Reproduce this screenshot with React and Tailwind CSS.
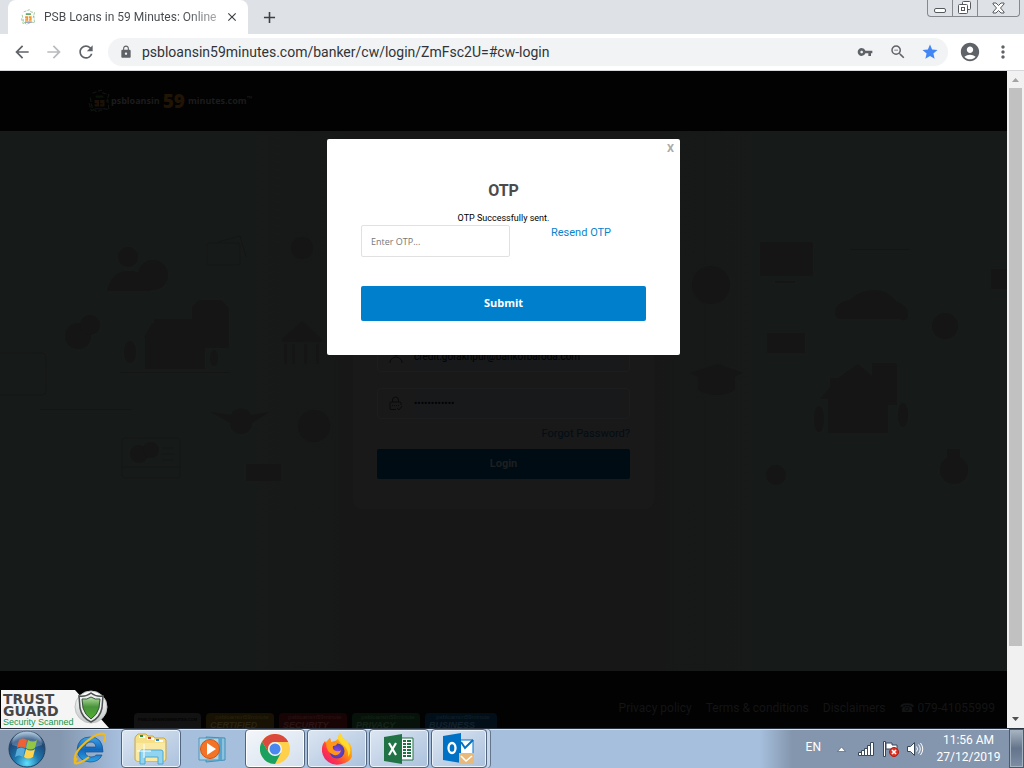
import React from "react";
import { MdArrowBack, MdArrowForward, MdRefresh, MdLock, MdVpnKey, MdZoomOut, MdStar, MdAccountCircle, MdMoreVert, MdClose, MdAdd } from "react-icons/md";

function NotesIcon({ className }) {
  return (
    <svg viewBox="0 0 20 22" className={className} aria-hidden="true">
      <g fill="none" stroke="#7fb77e" strokeWidth="1" strokeDasharray="4 1.5">
        <path d="M4 4 12 1 14 4 19 5 17 12" />
        <path d="M2 8 4 18 8 21 15 18 19 19 18 9" />
        <path d="M1 13 3 20 7 18" />
      </g>
      <path d="M7 6h7v2H7z" fill="#3e9a4c" />
      <path d="M6 10h4v6H6v-2h2v-1H6zM11 10h4v6h-4v-2h2v-1h-2z" fill="#f4962a" />
      <path d="M6 18h9" stroke="#52639c" strokeWidth="1.3" />
    </svg>
  );
}

function TabStrip() {
  return (
    <div className="flex h-[34px] shrink-0 items-start justify-between bg-[#dee1e6]">
      <div className="flex h-full items-center pl-2">
        <div className="flex h-full w-60 items-center rounded-t-lg bg-white pr-2 pl-3">
          <NotesIcon className="h-4 w-4 shrink-0" />
          <span className="ml-2 flex-1 overflow-hidden bg-linear-to-r from-[#45494d] from-80% to-[#b5b7b9] bg-clip-text font-[Roboto,sans-serif] text-[12px] whitespace-nowrap text-transparent">
            PSB Loans in 59 Minutes: Online
          </span>
          <button aria-label="Close tab" className="ml-1 flex h-4 w-4 items-center justify-center text-[#3c4043]">
            <MdClose size={14} />
          </button>
        </div>
        <button aria-label="New tab" className="ml-3 text-[#3c4043]">
          <MdAdd size={19} />
        </button>
      </div>
      <div className="mr-1 flex h-[17px] overflow-hidden rounded-b border border-t-0 border-[#85898e] text-[#55595e]">
        <button aria-label="Minimize" className="flex w-[25px] items-center justify-center border-r border-[#85898e]">
          <svg width="13" height="14" viewBox="0 0 13 14" fill="#fff" stroke="currentColor"><rect x=".5" y="7.500" width="11" height="4" rx="1.500" /></svg>
        </button>
        <button aria-label="Restore" className="flex w-[25px] items-center justify-center border-r border-[#85898e]">
          <svg width="14" height="14" viewBox="0 0 14 14" fill="#fff" stroke="currentColor"><rect x="4.500" y=".5" width="8" height="8" rx="1" /><rect x=".5" y="3.500" width="9" height="9" rx="1" /><rect x="3.500" y="6.500" width="3" height="3" /></svg>
        </button>
        <button aria-label="Close window" className="flex w-[41px] items-center justify-center">
          <svg width="13" height="12" viewBox="0 0 13 12" fill="#fff" stroke="currentColor"><path d="M1 1h3l2.500 2.500L9 1h3v1L8.500 6 12 10v1H9L6.500 8.500 4 11H1v-1l3.500-4L1 2z" /></svg>
        </button>
      </div>
    </div>
  );
}

function Toolbar() {
  return (
    <div className="flex h-[37px] shrink-0 items-center border-b border-[#d5d7da] bg-white text-[#5f6368]">
      <div className="flex w-[108px] items-center gap-3 pl-3">
        <button aria-label="Back"><MdArrowBack size={20} /></button>
        <button aria-label="Forward" className="text-[#b9bbbe]"><MdArrowForward size={20} /></button>
        <button aria-label="Reload"><MdRefresh size={20} /></button>
      </div>
      <div className="flex h-7 flex-1 items-center rounded-full bg-[#f1f3f4] pr-[9px] pl-[11px]">
        <MdLock size={14} className="shrink-0" />
        <input
          aria-label="Address"
          readOnly
          value="psbloansin59minutes.com/banker/cw/login/ZmFsc2U=#cw-login"
          className="ml-[9px] min-w-0 flex-1 bg-transparent font-[Roboto,sans-serif] text-[14px] text-[#303438] outline-none"
        />
        <div className="flex items-center gap-[14px]">
          <button aria-label="Saved passwords" className="mr-[2px]"><MdVpnKey size={16} /></button>
          <button aria-label="Zoom"><MdZoomOut size={18} /></button>
          <button aria-label="Bookmark" className="text-[#4285f4]"><MdStar size={18} /></button>
        </div>
      </div>
      <div className="flex w-[76px] items-center gap-3 pl-[11px]">
        <button aria-label="Profile"><MdAccountCircle size={22} /></button>
        <button aria-label="Menu"><MdMoreVert size={20} /></button>
      </div>
    </div>
  );
}

function Backdrop() {
  return (
    <svg className="absolute inset-0 h-full w-full" viewBox="0 0 1007 540" preserveAspectRatio="xMidYMin slice" aria-hidden="true">
      <g fill="#151515">
        <circle cx="128" cy="126" r="10" /><circle cx="153" cy="144" r="15" /><path d="M107 160q4-20 22-20t22 20z" />
        <circle cx="78" cy="205" r="13" /><circle cx="90" cy="194" r="10" />
        <path d="M154 188h38v-12l7-7h22l8 8v40h-24v21h-60v-32h-1l8-14h2z" />
        <ellipse cx="130" cy="221" rx="6" ry="11" /><ellipse cx="214" cy="227" rx="4" ry="8" />
        <path d="M120 241h110v1H120z" />
        <circle cx="302" cy="117" r="11" /><path d="M282 208l20-18 20 18v3h-40zM284 213h3v20h-3zM292 213h3v20h-3zM304 213h3v20h-3zM316 213h3v20h-3z" />
        <path d="M211 281l20 3a11 11 0 0 1 20 0l18-3-17 11a11 11 0 0 1-22 0z" />
        <circle cx="314" cy="295" r="16" /><path d="M246 333h35v17h-35zM40 278h92v1H40z" />
        <circle cx="139" cy="323" r="9" /><circle cx="151" cy="319" r="8" />
        <path d="M760 111h53v34h-53zM775 150h20v2h-20z" />
        <circle cx="711" cy="154" r="19" /><path d="M835 182q0-11 15-13 10-10 24-10t23 12q11 3 11 12t-8 5h-58q-7 0-7-6z" />
        <circle cx="945" cy="195" r="13" /><path d="M767 202h38v20h-38z" />
        <path d="M690 242l28-9 25 9-8 4v13q-18 10-37 0v-13z" />
        <path d="M820 268l10-12v-9h8l20-14 14 12v-13h23l2 2v40h-9v28h-60v-34z" />
        <ellipse cx="819" cy="288" rx="5" ry="13" /><ellipse cx="903" cy="284" rx="5" ry="12" />
        <circle cx="954" cy="339" r="14" /><path d="M947 318h13v10h-13z" /><circle cx="776" cy="344" r="10" />
        <path d="M991 138h16v20h-16zM850 118h60v1h-60z" />
      </g>
      <g fill="none" stroke="#151615">
        <rect x="207" y="112" width="33" height="22" rx="2" /><path d="M218 111l22-6 6 21" />
        <rect x="122" y="307" width="58" height="40" rx="3" /><path d="M122 336h58M162 317h12M162 323h12M162 329h12M145 207h58" />
        <rect x="-10" y="222" width="56" height="42" rx="4" />
      </g>
    </svg>
  );
}

function LoginCard() {
  return (
    <form className="relative w-[301px] rounded-lg bg-[#191919] px-6 pt-24 pb-[30px] text-[11px]" onSubmit={(e) => e.preventDefault()}>
      <div className="mb-4 flex h-[31px] rounded-sm border border-[#1c1d1e]">
        <label htmlFor="email" className="flex w-9 items-center justify-center">
          <svg width="16" height="18" viewBox="0 0 16 18" fill="none" stroke="#0a0a0a"><circle cx="8" cy="4" r="3.500" /><path d="M2 15v-2q2-4 6-4t6 4v2" /></svg>
          <span className="sr-only">Email</span>
        </label>
        <input id="email" defaultValue="credit.gorakhpur@bankofbaroda.com" className="mr-2 min-w-0 flex-1 bg-[#17191b] text-[10px] text-[#020202] outline-none" />
      </div>
      <div className="flex h-[31px] rounded-sm border border-[#1c1d1e]">
        <label htmlFor="password" className="flex w-9 items-center justify-center">
          <svg width="14" height="15" viewBox="0 0 14 15" fill="none" stroke="#0a0a0a"><path d="M3.500 6V4a3 3 0 0 1 6 0v2M7 13.500H2q-1 0-1-1V7q0-1 1-1h9q1 0 1 1v2" /><path d="M3 9.500h7" strokeDasharray="1 1" /><path d="M8 12l2 2 3-4" /></svg>
          <span className="sr-only">Password</span>
        </label>
        <input id="password" type="password" defaultValue="abcdefghijkl" className="mr-2 min-w-0 flex-1 bg-[#17191b] text-[10px] text-[#020202] outline-none" />
      </div>
      <div className="flex h-[30px] items-center justify-end">
        <a href="#forgot" className="text-[#020d16]">Forgot Password?</a>
      </div>
      <button className="h-[30px] w-full rounded-[2px] bg-[#000c14] font-bold text-[#1d1f20]">Login</button>
    </form>
  );
}

function OtpDialog() {
  return (
    <section role="dialog" aria-labelledby="otp-title" className="relative h-[216px] w-[353px] rounded-[2px] bg-white px-[34px] pt-10">
      <button aria-label="Close" className="absolute top-0 right-[6px] text-[11px] leading-5 font-bold text-[#aaa]">X</button>
      <h1 id="otp-title" className="text-center text-[16px] leading-6 font-bold text-[#4b4b4b]">OTP</h1>
      <p className="mt-2 text-center text-[9px] leading-[14px] text-black">OTP Successfully sent.</p>
      <div className="flex items-start">
        <input aria-label="Enter OTP" placeholder="Enter OTP..." className="h-8 w-[149px] rounded-[2px] border border-[#e1e1e1] px-[9px] font-['Open_Sans',sans-serif] text-[9px] outline-none placeholder:text-[#777]" />
        <a href="#resend" className="ml-[41px] text-[11px] leading-4 text-[#0a83cd]">Resend OTP</a>
      </div>
      <button className="mt-[29px] h-[35px] w-full rounded-[2px] bg-[#007fcc] font-['Open_Sans',sans-serif] text-[11px] font-bold text-white">Submit</button>
    </section>
  );
}

function TrustBadge() {
  return (
    <div className="absolute bottom-0 left-0 h-[38px] w-[110px]">
      <svg viewBox="0 0 110 38" className="absolute inset-0 h-full w-full" aria-hidden="true">
        <defs>
          <linearGradient id="tgShield" x1="0" y1="0" x2="0" y2="1"><stop stopColor="#b4dfa1" /><stop offset=".45" stopColor="#48943b" /><stop offset="1" stopColor="#4fae2e" /></linearGradient>
          <linearGradient id="tgRing" x1="0" y1="0" x2="0" y2="1"><stop stopColor="#fff" /><stop offset="1" stopColor="#c4c8c8" /></linearGradient>
        </defs>
        <path d="M1 0h74l34 38H1z" fill="#f5f5f5" />
        <circle cx="91" cy="17" r="16" fill="url(#tgRing)" stroke="#bfc3c3" />
        <path d="M91 3q5 4 12 3l-1 12q-2 10-11 14-9-4-11-14L79 6q7 1 12-3z" fill="#eee" stroke="#4c5151" strokeWidth="1.500" />
        <path d="M91 7q4 3 9 2l-1 9q-2 7-8 11-6-4-8-11l-1-9q5 1 9-2z" fill="url(#tgShield)" stroke="#35533a" />
      </svg>
      <div className="relative pt-[3px] pl-[3px]">
        <div className="font-['DejaVu_Sans',sans-serif] text-[14px] leading-[12px] font-bold text-[#454648]">
          <div>TRUST</div>
          <div>GUARD</div>
        </div>
        <div className="font-['Liberation_Sans',sans-serif] text-[9px] leading-[11px] text-[#159447]">Security Scanned</div>
      </div>
    </div>
  );
}

const seals = [
  { name: "CERTIFIED", box: "w-[68px] bg-[#171203]", text: "text-[#2a2412]" },
  { name: "SECURITY", box: "w-[68px] bg-[#190405]", text: "text-[#2b1415]" },
  { name: "PRIVACY", box: "w-[68px] bg-[#07130a]", text: "text-[#152419]" },
  { name: "BUSINESS", box: "w-[72px] bg-[#030f18]", text: "text-[#12222d]" },
];

function PageFooter() {
  return (
    <footer className="flex h-[57px] shrink-0 items-end justify-between bg-[#020202] pr-3 pl-[134px]">
      <div className="flex gap-[5px] font-['Liberation_Sans',sans-serif]">
        <div className="h-[15px] w-[67px] overflow-hidden rounded-t bg-[#121212] pt-1 text-center text-[4px] leading-[6px] font-bold text-[#030303]">PSBLOANSIN59MINUTES.COM</div>
        {seals.map((s) => (
          <div key={s.name} className={`h-[15px] overflow-hidden rounded-t pl-1 ${s.box} ${s.text}`}>
            <div className="pt-px text-center text-[6px] leading-[7px]">psbloansin59minute</div>
            <div className="text-[9px] leading-[9px] font-bold italic">{s.name}</div>
          </div>
        ))}
      </div>
      <nav className="flex items-center gap-[14px] pb-[11px] text-[12px] leading-[17px] text-[#131415]">
        <a href="#privacy">Privacy policy</a>
        <a href="#terms">Terms &amp; conditions</a>
        <a href="#disclaimers">Disclaimers</a>
        <a href="tel:07941055999"><span className="font-['DejaVu_Sans',sans-serif]">☎</span> 079-41055999</a>
      </nav>
    </footer>
  );
}

function Viewport() {
  return (
    <div className="flex flex-1">
      <div className="relative flex min-w-0 flex-1 flex-col overflow-hidden font-[Roboto,sans-serif]">
        <header className="flex h-15 shrink-0 items-center bg-[#020202] pl-[87px]">
          <NotesIcon className="h-6 w-6 opacity-10" />
          <div className="flex items-center gap-[3px] font-['Open_Sans',sans-serif] text-[9px] font-bold text-[#1c1c1c]">
            <span>psbloansin</span>
            <span className="text-[19px] leading-6 font-extrabold text-[#211405]">59</span>
            <span>minutes.com<sup className="text-[7px]">™</sup></span>
          </div>
        </header>
        <main className="relative flex flex-1 items-end justify-center bg-[linear-gradient(90deg,#161a18_25%,#171717_35%,#171717_65%,#161a18_75%)] pb-[162px]">
          <Backdrop />
          <LoginCard />
        </main>
        <PageFooter />
        <div className="absolute inset-0 flex items-start justify-center pt-[68px]">
          <OtpDialog />
        </div>
        <TrustBadge />
      </div>
      <div className="flex w-[17px] shrink-0 flex-col items-center justify-between bg-[#f1f1f1]" aria-hidden="true">
        <svg className="shrink-0" width="17" height="17" viewBox="0 0 17 17"><path d="M5 11h7L8.500 7z" fill="#a3a3a3" /></svg>
        <div className="mb-auto h-[85%] w-[13px] bg-[#c1c1c1]" />
        <svg className="shrink-0" width="17" height="17" viewBox="0 0 17 17"><path d="M5 6h7L8.500 10z" fill="#505050" /></svg>
      </div>
    </div>
  );
}

function StartOrb() {
  return (
    <svg width="38" height="38" viewBox="0 0 38 38">
      <defs>
        <radialGradient id="orb" cx=".5" cy=".9" r=".85"><stop stopColor="#5fe0ff" /><stop offset=".4" stopColor="#1d77ad" /><stop offset=".8" stopColor="#1e4677" /><stop offset="1" stopColor="#8db0cc" /></radialGradient>
      </defs>
      <circle cx="19" cy="19" r="18" fill="url(#orb)" stroke="#23405f" />
      <path d="M4 15a15 15 0 0 1 30 0q-14 6-30 0z" fill="#fff" opacity=".22" />
      <path d="M11 10q4-3 8 0l-2 8q-4-3-8 0z" fill="#ed6135" />
      <path d="M20 10q5 3 9 0l-2 8q-5 3-9 0z" fill="#92c746" />
      <path d="M9 19q4-3 8 0l-2 8q-4-3-8 0z" fill="#58acd9" />
      <path d="M18 19q5 3 9 0l-2 8q-5 3-9 0z" fill="#ffd34b" />
    </svg>
  );
}

function ExplorerE() {
  return (
    <svg width="34" height="34" viewBox="0 0 34 34">
      <defs><linearGradient id="ieb" x1="0" y1="0" x2="0" y2="1"><stop stopColor="#3ba4e9" /><stop offset=".5" stopColor="#1366ba" /><stop offset="1" stopColor="#2ea5e8" /></linearGradient></defs>
      <path d="M31 20H13q1 5 6 5 4 0 5-2h6q-3 7-12 7Q6 29 5 18 6 5 18 5q13 0 13 15zM13 15h11q-1-5-5-5-5 0-6 5z" fill="url(#ieb)" stroke="#124f91" strokeWidth=".7" />
      <path d="M5 26Q0 33 6 31q5-1 11-6M3 29q-2-8 11-19Q26 0 32 2q3 1 0 8" fill="none" stroke="#efb91f" strokeWidth="2.200" />
    </svg>
  );
}

function FolderIcon() {
  return (
    <svg width="34" height="32" viewBox="0 0 34 32">
      <path d="M2 3l2-2h8l2 2h5l2 2h9l2 2v19q0 2-2 2H3q-2 0-2-2V5z" fill="#f5df87" stroke="#c9a849" />
      <path d="M5 3h6v2H5zM13 5h7v2h-7zM21 7h8v2h-8z" fill="#fff" />
      <path d="M6 2h3v2H6z" fill="#219548" /><path d="M14 4h3v2h-3z" fill="#d43a32" /><path d="M22 6h3v2h-3z" fill="#278bd1" />
      <path d="M2 10h29v16q0 2-2 2H4q-2 0-2-2z" fill="#fae9a2" />
      <path d="M6 31V19q0-2 2-2h19q2 0 2 2v12h-5v-7H11v7z" fill="#92d4ef" stroke="#4ca7cf" />
      <path d="M10 11v14M3 18h14" stroke="#fff" />
    </svg>
  );
}

function MediaIcon() {
  return (
    <svg width="30" height="28" viewBox="0 0 30 28">
      <path d="M8 2l19 1v22l-19 2z" fill="#8bc2df" stroke="#428eb7" />
      <path d="M1 3h20v22H1z" fill="#a8d5e9" stroke="#5095b9" /><path d="M21 2l3 1v22l-3 1z" fill="#5aa4cb" />
      <circle cx="12" cy="14" r="9.500" fill="#f47427" stroke="#d55411" /><path d="M9 8l9 6-9 6z" fill="#fff" />
    </svg>
  );
}

function ChromeIcon() {
  return (
    <svg width="30" height="30" viewBox="0 0 30 30">
      <circle cx="15" cy="15" r="15" fill="#ffd04b" />
      <path d="M2 7.500A15 15 0 0 0 15 30l6.100-11.500H8.900z" fill="#1aa15f" />
      <path d="M2 7.500a15 15 0 0 1 26.300 0.500H15a7 7 0 0 0-6.100 10.500z" fill="#db4a3c" />
      <circle cx="15" cy="15" r="7" fill="#f4f4f4" /><circle cx="15" cy="15" r="5.500" fill="#4a88ef" />
    </svg>
  );
}

function FirefoxIcon() {
  return (
    <svg width="30" height="32" viewBox="0 0 30 32">
      <defs>
        <linearGradient id="fx" x1="1" y1="0" x2="0" y2="1"><stop stopColor="#fff44f" /><stop offset=".4" stopColor="#ff980e" /><stop offset=".7" stopColor="#ff3647" /><stop offset="1" stopColor="#e31587" /></linearGradient>
        <radialGradient id="fxg"><stop stopColor="#8e45ee" /><stop offset="1" stopColor="#4c3ca8" /></radialGradient>
      </defs>
      <path d="M18 0q3 6 7 8l1 3 1-2q9 15-4 21-12 5-20-4Q-2 19 1 11l2-3 1 2 4-5 1 4q4 0 7-3 0-4 2-6z" fill="url(#fx)" />
      <circle cx="15" cy="18" r="7.500" fill="url(#fxg)" />
      <path d="M4 9l4-4 1 4 6 1q0 3-4 3-1 4 3 5 3 1 5-1-1 6-7 5-8-2-8-13z" fill="#ff9618" />
      <path d="M18 0q3 6 7 8 6 9 1 16 1-8-5-12-5-4-5-7 0-3 2-5z" fill="#ffda30" />
    </svg>
  );
}

function ExcelIcon() {
  return (
    <svg width="30" height="30" viewBox="0 0 30 30">
      <path d="M17 4h12v22H17z" fill="#fff" stroke="#217346" />
      <path d="M19 6h3v2h-3zM23 6h4v2h-4zM19 9h3v2h-3zM23 9h4v2h-4zM19 12h3v2h-3zM23 12h4v2h-4zM19 15h3v2h-3zM23 15h4v2h-4zM19 18h3v2h-3zM23 18h4v2h-4zM19 21h3v2h-3zM23 21h4v2h-4z" fill="#217346" />
      <path d="M0 3l18-3v30L0 27z" fill="#217346" /><path d="M5 9l7 12M12 9L5 21" stroke="#fff" strokeWidth="2.200" />
    </svg>
  );
}

function OutlookIcon() {
  return (
    <svg width="32" height="31" viewBox="0 0 32 31">
      <path d="M17 7h13v16H17z" fill="#fff" stroke="#0072c6" /><path d="M18 9l4 6 8-8" fill="none" stroke="#0072c6" strokeWidth="2" />
      <path d="M0 3l18-3v30L0 27z" fill="#0072c6" /><ellipse cx="9" cy="15" rx="3.500" ry="5" fill="none" stroke="#fff" strokeWidth="2.300" />
      <path d="M16 20h15v11H16z" fill="#e9b979" /><path d="M18 23l5 5 6-5" fill="none" stroke="#fff" strokeWidth="1.500" />
    </svg>
  );
}

const apps = [
  { name: "Internet Explorer", Icon: ExplorerE, style: "" },
  { name: "Windows Explorer", Icon: FolderIcon, style: "open" },
  { name: "Media Player", Icon: MediaIcon, style: "" },
  { name: "Google Chrome", Icon: ChromeIcon, style: "active" },
  { name: "Firefox", Icon: FirefoxIcon, style: "open" },
  { name: "Excel", Icon: ExcelIcon, style: "open" },
  { name: "Outlook", Icon: OutlookIcon, style: "stack" },
];

const appStyles = {
  "": "w-15",
  open: "w-15 rounded-sm border border-[#53657d] bg-linear-to-br from-[#dce6f2] to-[#abc1dd] shadow-[inset_0_0_0_1px_#eaf2fb]",
  active: "w-15 rounded-sm border border-[#53657d] bg-linear-to-br from-[#f4f7fb] to-[#d3dfed] shadow-[inset_0_0_0_1px_#ffffff]",
  stack: "w-14 rounded-sm border border-[#53657d] bg-linear-to-br from-[#dce6f2] to-[#abc1dd] shadow-[inset_0_0_0_1px_#eaf2fb,3px_0_0_#c6d7eb,4px_0_0_#64758c]",
};

function Taskbar() {
  return (
    <div className="flex h-10 shrink-0 justify-between border-t border-[#28323f] bg-[linear-gradient(90deg,#8497af_0,#8497af_60px,#a6bfdd_120px,#a6bfdd_calc(100%_-_264px),#8496ad_calc(100%_-_232px),#8496ad_100%)] shadow-[inset_0_1px_0_#d5e2f0]">
      <div className="flex gap-[2px]">
        <button aria-label="Start" className="flex w-[57px] items-center justify-center pr-1"><StartOrb /></button>
        {apps.map(({ name, Icon, style }) => (
          <button key={name} aria-label={name} className={`flex items-center justify-center ${appStyles[style]}`}><Icon /></button>
        ))}
      </div>
      <div className="flex items-center font-[Roboto,sans-serif] text-[12px] text-white">
        <span className="pb-1">EN</span>
        <div className="ml-4 flex items-center gap-2">
          <svg className="mr-1" width="9" height="6" viewBox="0 0 9 6"><path d="M.5 5.500h8L4.500 1z" fill="#fff" stroke="#53647a" strokeWidth=".7" /></svg>
          <svg width="17" height="14" viewBox="0 0 17 14" fill="#fff" stroke="#39475a"><path d="M.5 10.500h3v3h-3zM3.500 8.500h3v5h-3zM6.500 6.500h3v7h-3zM9.500 3.500h3v10h-3zM12.500 .5h3v13h-3z" /></svg>
          <svg width="16" height="16" viewBox="0 0 16 16"><path d="M.5 .5h2v15h-2zM3 2h6v2h5v6H8V8H3z" fill="#fff" stroke="#39475a" /><circle cx="11" cy="11" r="4.500" fill="#e03425" stroke="#b01d12" /><path d="M9 9l4 4M13 9l-4 4" stroke="#fff" strokeWidth="1.600" /></svg>
          <svg width="17" height="16" viewBox="0 0 17 16"><path d="M.5 5.500h3l4-4v13l-4-4h-3z" fill="#fff" stroke="#39475a" /><path d="M9.500 5.500q2 2.500 0 5M11.500 3.500q3.500 4.500 0 9M13.500 2q4.500 6 0 12" fill="none" stroke="#fff" /></svg>
        </div>
        <div className="w-[85px] pl-1 text-center leading-[17px] whitespace-nowrap">
          <div>11:56 AM</div>
          <div>27/12/2019</div>
        </div>
        <button aria-label="Show desktop" className="h-full w-[15px] border border-[#4b596b] bg-linear-to-b from-[#a9b5c2] via-[#64748a] to-[#7d8ea4] shadow-[inset_0_0_0_1px_#a4b1c0]" />
      </div>
    </div>
  );
}

export default function App() {
  return (
    <div className="flex min-h-screen flex-col font-['Open_Sans',sans-serif]">
      <TabStrip />
      <Toolbar />
      <Viewport />
      <Taskbar />
    </div>
  );
}
